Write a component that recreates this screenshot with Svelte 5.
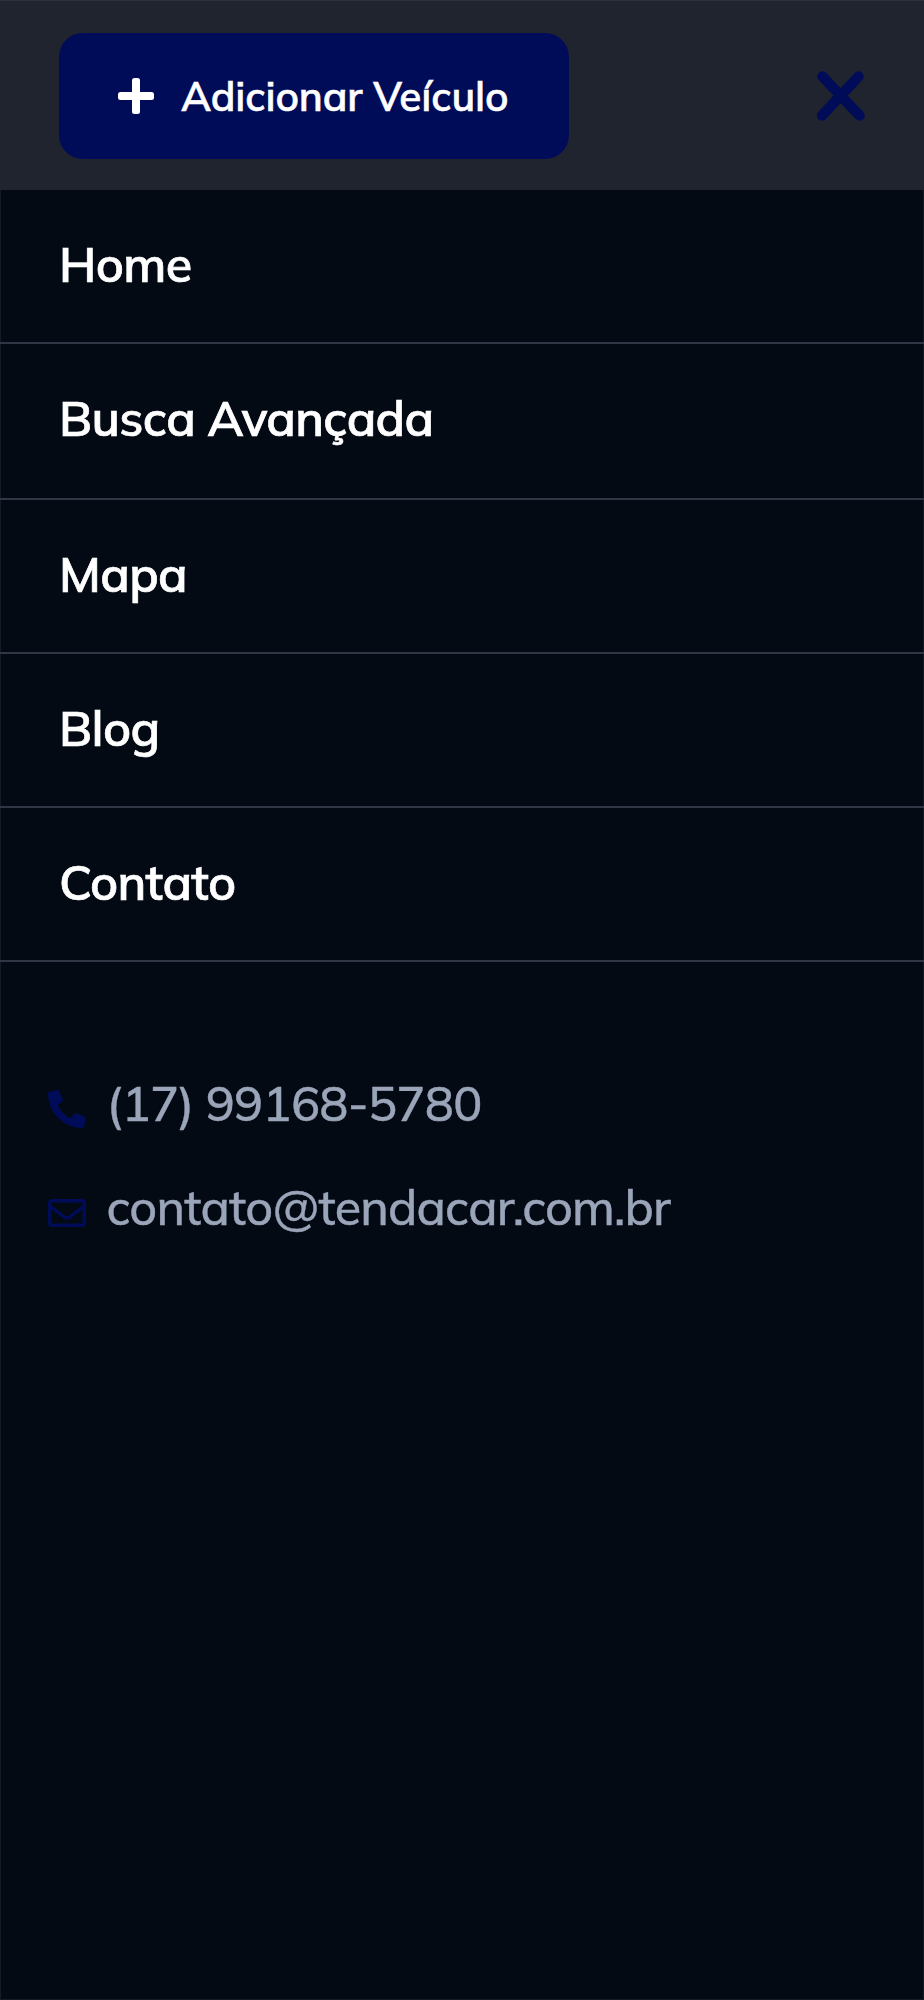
<script lang="ts">
  const links = [
    { label: 'Home', href: '#home' },
    { label: 'Busca Avançada', href: '#busca' },
    { label: 'Mapa', href: '#mapa' },
    { label: 'Blog', href: '#blog' },
    { label: 'Contato', href: '#contato' },
  ];

  let open = $state(true);
</script>

{#if open}
  <div class="menu">
    <header>
      <button type="button" class="add">
        <svg width="36" height="36" viewBox="0 0 36 36" aria-hidden="true">
          <rect x="0" y="14" width="36" height="8" rx="2.5" fill="currentColor" />
          <rect x="14" y="0" width="8" height="36" rx="2.5" fill="currentColor" />
        </svg>
        <span>Adicionar Veículo</span>
      </button>
      <button type="button" class="close" aria-label="Fechar" onclick={() => (open = false)}>
        <svg width="48" height="50" viewBox="0 0 48 50" aria-hidden="true">
          <path d="M5.5 5.5L42.5 44.5M41.5 5.5L5 44.5" stroke="currentColor" stroke-width="10.500" stroke-linecap="round" />
        </svg>
      </button>
    </header>

    <nav>
      {#each links as link}
        <a href={link.href}>{link.label}</a>
      {/each}
    </nav>

    <div class="contact">
      <a href="tel:+5517991685780">
        <svg width="38" height="38" viewBox="0 0 512 512" aria-hidden="true">
          <path fill="currentColor" d="M18.600 24.300l104-24c11.300-2.600 22.900 3.300 27.500 13.900l48 112c4.200 9.800 1.400 21.300-6.900 28l-60.600 49.600c36 76.700 98.900 140.500 177.200 177.200l49.600-60.600c6.800-8.300 18.200-11.100 28-6.900l112 48c10.700 4.600 16.500 16.100 13.900 27.500l-24 104C484.800 503.700 475.200 512 464 512C207.900 512 0 304.500 0 48c0-11.200 7.700-20.900 18.600-23.700z" />
        </svg>
        <span>(17) 99168-5780</span>
      </a>
      <a class="mail" href="mailto:contato@tendacar.com.br">
        <svg width="38" height="28" viewBox="0 0 38 28" aria-hidden="true">
          <rect x="1.750" y="1.750" width="34.500" height="24.500" rx="2" fill="none" stroke="currentColor" stroke-width="3.500" />
          <path d="M2 7L14 16.500Q19 21.500 24 16.500L36 7" fill="none" stroke="currentColor" stroke-width="3.500" />
        </svg>
        <span>contato@tendacar.com.br</span>
      </a>
    </div>
  </div>
{/if}

<style>
  :global(body) {
    margin: 0;
    background: #030a14;
  }

  .menu {
    box-sizing: border-box;
    min-height: 2000px;
    border-bottom: 1px solid #141b25;
    font-family: Mulish, Muli, Lato, sans-serif;
    background: #030a14;
    box-shadow: inset 1px 0 #141b25, inset -1px 0 #141b25;
  }

  header {
    box-sizing: border-box;
    display: flex;
    align-items: center;
    justify-content: space-between;
    height: 190px;
    padding: 1px 59px 0 59px;
    border-top: 1px solid #2b303a;
    background: #20242e;
  }

  button {
    padding: 0;
    border: 0;
    font: inherit;
    cursor: pointer;
  }

  .add {
    display: flex;
    align-items: center;
    gap: 27px;
    width: 510px;
    height: 126px;
    padding-left: 59px;
    border-radius: 24px;
    background: #000c58;
    color: #fff;
    font-size: 40.5px;
    font-weight: 600;
    letter-spacing: -0.1px;
    white-space: nowrap;
    -webkit-text-stroke: 0.6px currentColor;
  }

  .add span {
    padding-bottom: 1px;
  }

  .close {
    display: flex;
    background: none;
    color: #000c58;
  }

  svg {
    display: block;
    flex: none;
  }

  nav {
    display: flex;
    flex-direction: column;
  }

  nav a {
    box-sizing: border-box;
    height: 154px;
    padding-left: 59px;
    border-bottom: 2px solid #303744;
    color: #fff;
    font-size: 48.5px;
    font-weight: 600;
    letter-spacing: -0.65px;
    line-height: 148px;
    text-decoration: none;
    -webkit-text-stroke: 0.7px currentColor;
  }

  nav a:nth-child(2) {
    height: 156px;
  }

  .contact {
    display: flex;
    flex-direction: column;
    padding: 90px 0 0 47.5px;
  }

  .contact a {
    display: flex;
    align-items: center;
    gap: 21px;
    height: 104px;
    color: #9aa5b9;
    font-size: 48.5px;
    font-weight: 500;
    letter-spacing: -0.7px;
    text-decoration: none;
    -webkit-text-stroke: 0.4px currentColor;
  }

  .contact .mail {
    letter-spacing: -0.83px;
  }

  .contact svg {
    margin-top: 9px;
    color: #000c58;
  }

  .contact span {
    padding-bottom: 4px;
  }
</style>
